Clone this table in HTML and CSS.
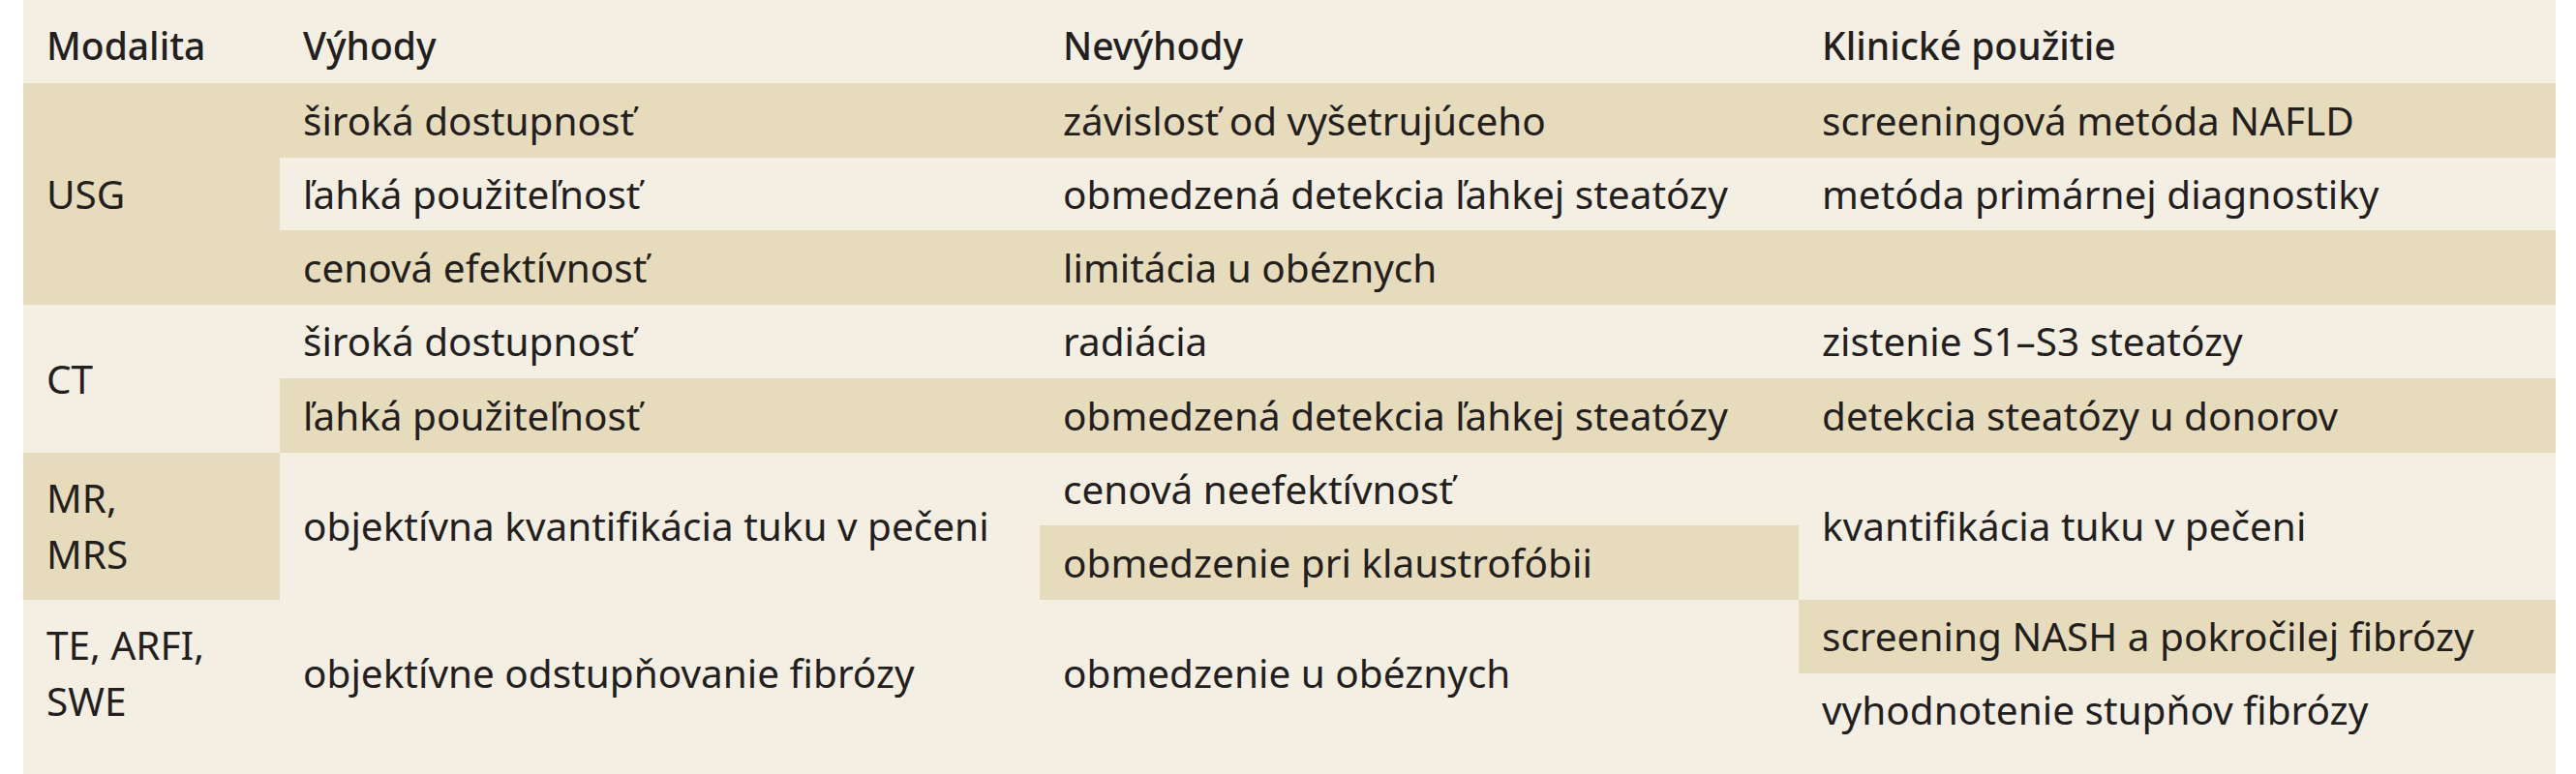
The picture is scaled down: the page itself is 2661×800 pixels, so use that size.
FILE: index.html
```html
<!DOCTYPE html>
<html lang="sk">
<head>
<meta charset="utf-8">
<title>Modality</title>
<link rel="stylesheet" href="styles.css">
</head>
<body>
<div class="tbl">
  <div class="c hd r1 c1">Modalita</div>
  <div class="c hd r1 c2">Výhody</div>
  <div class="c hd r1 c3">Nevýhody</div>
  <div class="c hd r1 c4">Klinické použitie</div>

  <div class="c dk usg-mod">USG</div>
  <div class="c dk r2 c2">široká dostupnosť</div>
  <div class="c dk r2 c3">závislosť od vyšetrujúceho</div>
  <div class="c dk r2 c4">screeningová metóda NAFLD</div>
  <div class="c lt r3 c2">ľahká použiteľnosť</div>
  <div class="c lt r3 c3">obmedzená detekcia ľahkej steatózy</div>
  <div class="c lt r3 c4">metóda primárnej diagnostiky</div>
  <div class="c dk r4 c2">cenová efektívnosť</div>
  <div class="c dk r4 c3">limitácia u obéznych</div>
  <div class="c dk r4 c4"></div>

  <div class="c lt ct-mod">CT</div>
  <div class="c lt r5 c2">široká dostupnosť</div>
  <div class="c lt r5 c3">radiácia</div>
  <div class="c lt r5 c4">zistenie S1–S3 steatózy</div>
  <div class="c dk r6 c2">ľahká použiteľnosť</div>
  <div class="c dk r6 c3">obmedzená detekcia ľahkej steatózy</div>
  <div class="c dk r6 c4">detekcia steatózy u donorov</div>

  <div class="c dk mr-mod">MR,<br>MRS</div>
  <div class="c lt mr-vyh">objektívna kvantifikácia tuku v pečeni</div>
  <div class="c lt r7 c3">cenová neefektívnosť</div>
  <div class="c dk r8 c3">obmedzenie pri klaustrofóbii</div>
  <div class="c lt mr-kl">kvantifikácia tuku v pečeni</div>

  <div class="c lt te-mod">TE, ARFI,<br>SWE</div>
  <div class="c lt te-vyh">objektívne odstupňovanie fibrózy</div>
  <div class="c lt te-nev">obmedzenie u obéznych</div>
  <div class="c dk r9 c4">screening NASH a pokročilej fibrózy</div>
  <div class="c lt r10 c4">vyhodnotenie stupňov fibrózy</div>

  <div class="c lt foot"></div>
</div>
</body>
</html>
```

FILE: styles.css
```css
html, body {
  margin: 0;
  padding: 0;
  background: #ffffff;
}

body {
  padding-left: 24px;
}

.tbl {
  display: grid;
  width: 2616px;
  height: 800px;
  grid-template-columns: 265px 785px 784px 782px;
  grid-template-rows: 86px 77px 75px 77px 76px 77px 75px 77px 76px 76px 28px;
  background: #f4efe3;
  font-family: "Noto Sans", "Open Sans", sans-serif;
  font-size: 40.5px;
  color: #231f20;
}

.c {
  display: flex;
  align-items: center;
  padding-left: 24px;
  line-height: 58px;
  white-space: nowrap;
}

.hd { background: #f4efe3; padding-top: 8px; font-weight: 500; font-size: 39px; }
.lt { background: #f4efe3; }
.dk { background: #e6dcbc; }

.r1 { grid-row: 1; }
.r2 { grid-row: 2; }
.r3 { grid-row: 3; }
.r4 { grid-row: 4; }
.r5 { grid-row: 5; }
.r6 { grid-row: 6; }
.r7 { grid-row: 7; }
.r8 { grid-row: 8; }
.r9 { grid-row: 9; }
.r10 { grid-row: 10; }

.c1 { grid-column: 1; }
.c2 { grid-column: 2; }
.c3 { grid-column: 3; }
.c4 { grid-column: 4; }

.usg-mod { grid-column: 1; grid-row: 2 / 5; }
.ct-mod { grid-column: 1; grid-row: 5 / 7; }
.mr-mod { grid-column: 1; grid-row: 7 / 9; }
.mr-vyh { grid-column: 2; grid-row: 7 / 9; }
.mr-kl { grid-column: 4; grid-row: 7 / 9; }
.te-mod { grid-column: 1; grid-row: 9 / 11; }
.te-vyh { grid-column: 2; grid-row: 9 / 11; }
.te-nev { grid-column: 3; grid-row: 9 / 11; }
.foot { grid-column: 1 / 5; grid-row: 11; }
```
